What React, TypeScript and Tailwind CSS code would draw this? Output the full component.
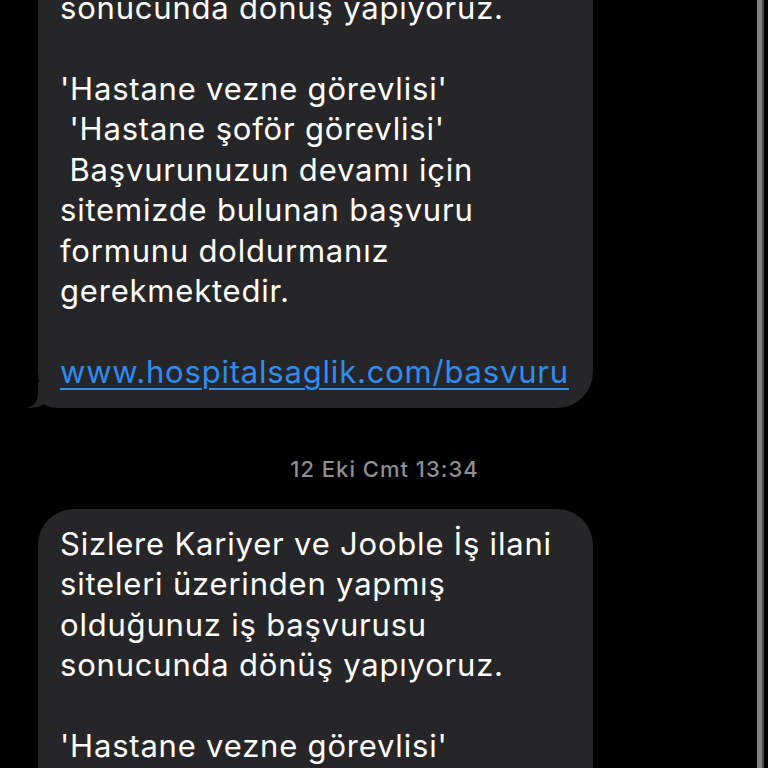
const lines = [
  "Sizlere Kariyer ve Jooble İş ilani",
  "siteleri üzerinden yapmış",
  "olduğunuz iş başvurusu",
  "sonucunda dönüş yapıyoruz.",
  "",
  "'Hastane vezne görevlisi'",
  " 'Hastane şoför görevlisi'",
  " Başvurunuzun devamı için",
  "sitemizde bulunan başvuru",
  "formunu doldurmanız",
  "gerekmektedir.",
  "",
];

// iOS style tail at the bottom-left of a received bubble
function Tail() {
  return (
    <svg
      className="absolute -left-[11px] bottom-0"
      width="50"
      height="26"
      viewBox="0 0 50 26"
    >
      <path
        d="M11 0 L11 12 C11 19 7 24 0 26 C7 26 13 24.5 17 22 C20 24.5 26 26 34 26 L50 26 L50 0 Z"
        fill="#262628"
      />
    </svg>
  );
}

function Bubble({ tail, className = "" }: { tail?: boolean; className?: string }) {
  return (
    <div className={`relative w-[555px] rounded-[36px] bg-[#262628] px-[22px] py-[15px] ${className}`}>
      {tail && <Tail />}
      <div className="relative text-[31px] leading-[40.5px] tracking-[0.8px] text-white whitespace-pre">
        {lines.map((l, i) => (
          <div key={i} className="h-[40.5px]">
            {l}
          </div>
        ))}
        <div className="h-[40.5px]">
          <span className="text-[#2f8cf0] underline decoration-2 underline-offset-[5px]">
            www.hospitalsaglik.com/basvuru
          </span>
        </div>
      </div>
    </div>
  );
}

export default function App() {
  return (
    <div
      className="flex h-[768px] w-[768px] overflow-hidden bg-black"
      style={{ fontFamily: "Inter, 'Noto Sans', sans-serif" }}
    >
      <div className="flex flex-1 flex-col pl-[38px]">
        <Bubble tail className="-mt-[149px] shrink-0" />
        <div className="mt-[49px] mr-[26px] text-center text-[22px] leading-[24px] tracking-[1px] font-medium text-[#8e8e93]">
          12 Eki Cmt 13:34
        </div>
        <Bubble className="mt-[28px] shrink-0" />
      </div>
      <div className="flex w-[11px] shrink-0">
        <div className="w-[5px] bg-[#808080]" />
        <div className="w-[1.5px] bg-[#4a4a4a]" />
      </div>
    </div>
  );
}
